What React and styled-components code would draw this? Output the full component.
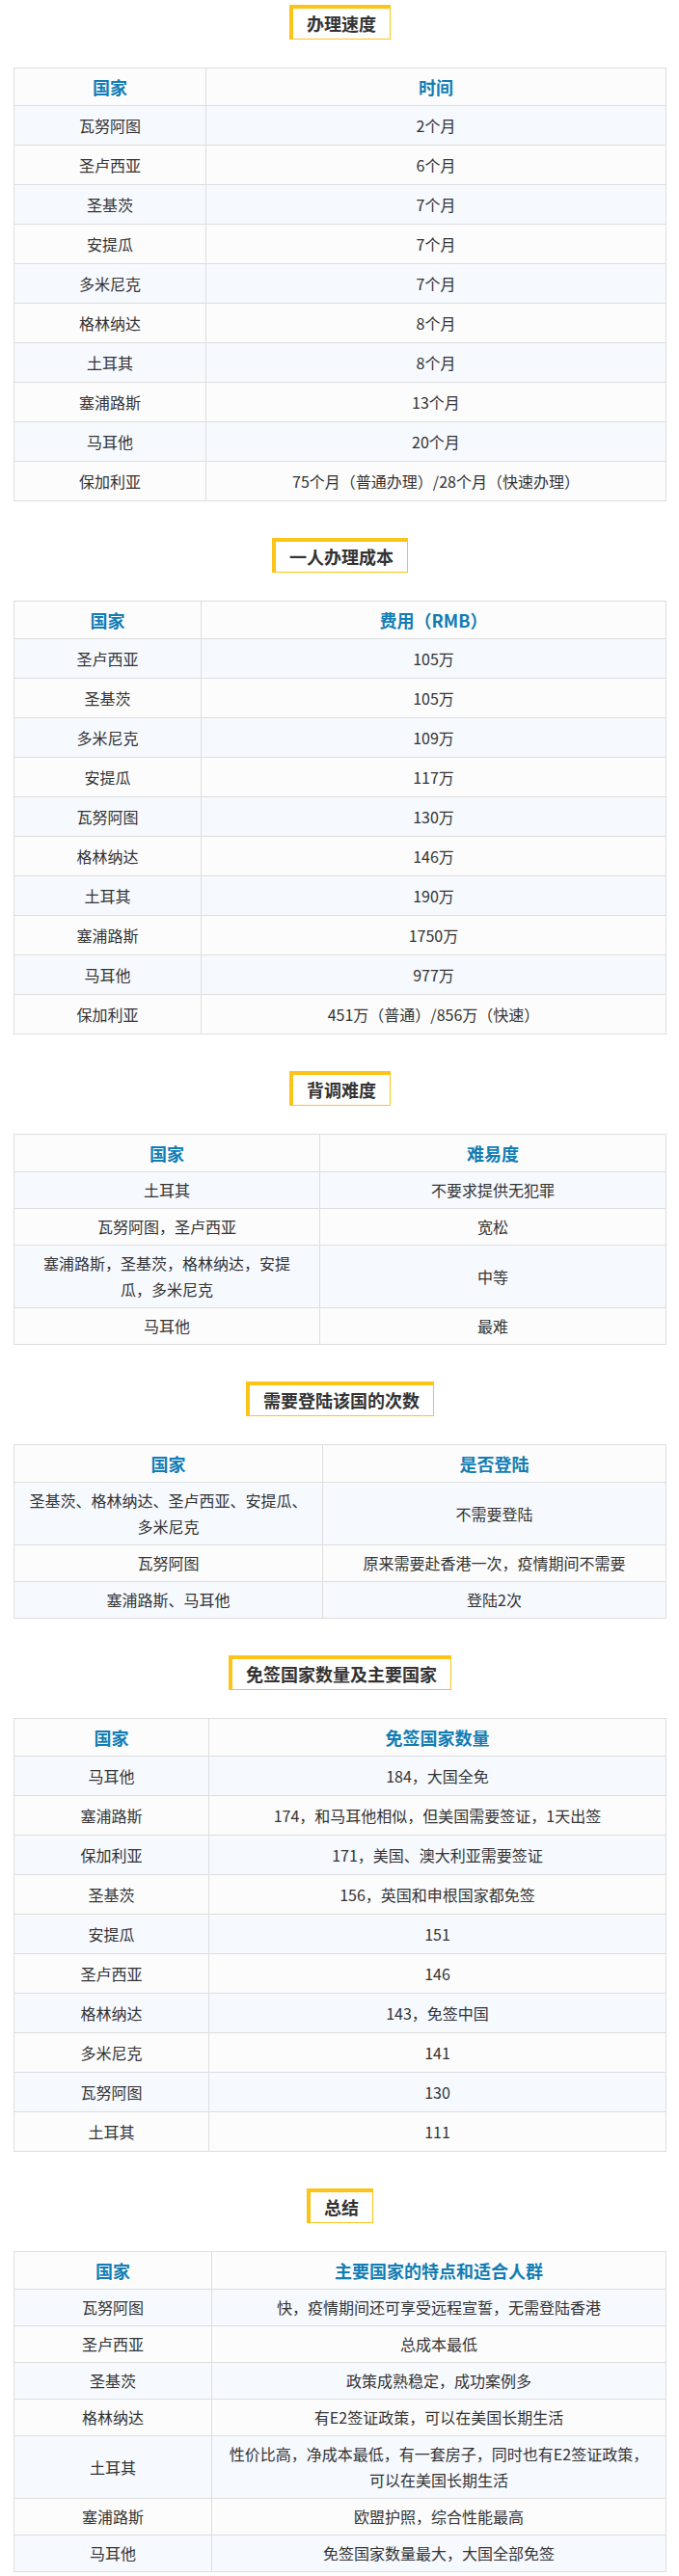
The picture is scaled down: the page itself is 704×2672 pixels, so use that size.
import styled, { createGlobalStyle } from "styled-components";

const GlobalStyle = createGlobalStyle`
  body {
    margin: 0;
    background: #ffffff;
    font-family: "Noto Sans CJK SC", "Noto Sans", sans-serif;
    color: #333333;
  }
`;

const Page = styled.div`
  padding: 5px 13px 14px 14px;
`;

const Section = styled.section`
  & + & {
    margin-top: 38px;
  }
`;

const TitleRow = styled.div`
  display: flex;
  justify-content: center;
  margin-bottom: 29px;
`;

const Title = styled.h2`
  margin: 0;
  height: 36px;
  box-sizing: border-box;
  padding: 0 14px;
  border: 1px solid #fcc419;
  border-top-width: 4px;
  border-left-width: 4px;
  font-size: 18px;
  font-weight: 700;
  line-height: 30px;
  color: #333333;
  white-space: nowrap;
`;

const Table = styled.table`
  width: 100%;
  table-layout: fixed;
  border-collapse: collapse;
  border: 1px solid #dedede;
`;

const HeadCell = styled.th`
  box-sizing: border-box;
  width: ${p => (p.$w ? `${p.$w}px` : "auto")};
  background: #fcfcfc;
  border: 1px solid #dedede;
  padding: 6px 14px 5px;
  font-size: 18px;
  font-weight: 700;
  line-height: 27px;
  color: #127db4;
  text-align: center;
`;

const Row = styled.tr`
  background: ${p => (p.$odd ? "#f6f9fe" : "#fcfcfc")};
`;

const Cell = styled.td`
  border: 1px solid #dedede;
  padding: ${p => (p.$tall ? "7px" : "5px")} ${p => p.$pad}px
    ${p => (p.$tall ? "6px" : "5px")};
  font-size: 16px;
  line-height: 27px;
  color: #333333;
  text-align: center;
`;

const sections = [
  {
    title: "办理速度",
    head: ["国家", "时间"],
    col: 199,
    tall: true,
    rows: [
      ["瓦努阿图", "2个月"],
      ["圣卢西亚", "6个月"],
      ["圣基茨", "7个月"],
      ["安提瓜", "7个月"],
      ["多米尼克", "7个月"],
      ["格林纳达", "8个月"],
      ["土耳其", "8个月"],
      ["塞浦路斯", "13个月"],
      ["马耳他", "20个月"],
      ["保加利亚", "75个月（普通办理）/28个月（快速办理）"],
    ],
  },
  {
    title: "一人办理成本",
    head: ["国家", "费用（RMB）"],
    col: 194,
    tall: true,
    rows: [
      ["圣卢西亚", "105万"],
      ["圣基茨", "105万"],
      ["多米尼克", "109万"],
      ["安提瓜", "117万"],
      ["瓦努阿图", "130万"],
      ["格林纳达", "146万"],
      ["土耳其", "190万"],
      ["塞浦路斯", "1750万"],
      ["马耳他", "977万"],
      ["保加利亚", "451万（普通）/856万（快速）"],
    ],
  },
  {
    title: "背调难度",
    head: ["国家", "难易度"],
    col: 317,
    pad: 26,
    rows: [
      ["土耳其", "不要求提供无犯罪"],
      ["瓦努阿图，圣卢西亚", "宽松"],
      ["塞浦路斯，圣基茨，格林纳达，安提瓜，多米尼克", "中等"],
      ["马耳他", "最难"],
    ],
  },
  {
    title: "需要登陆该国的次数",
    head: ["国家", "是否登陆"],
    col: 320,
    rows: [
      ["圣基茨、格林纳达、圣卢西亚、安提瓜、多米尼克", "不需要登陆"],
      ["瓦努阿图", "原来需要赴香港一次，疫情期间不需要"],
      ["塞浦路斯、马耳他", "登陆2次"],
    ],
  },
  {
    title: "免签国家数量及主要国家",
    head: ["国家", "免签国家数量"],
    col: 202,
    tall: true,
    rows: [
      ["马耳他", "184，大国全免"],
      ["塞浦路斯", "174，和马耳他相似，但美国需要签证，1天出签"],
      ["保加利亚", "171，美国、澳大利亚需要签证"],
      ["圣基茨", "156，英国和申根国家都免签"],
      ["安提瓜", "151"],
      ["圣卢西亚", "146"],
      ["格林纳达", "143，免签中国"],
      ["多米尼克", "141"],
      ["瓦努阿图", "130"],
      ["土耳其", "111"],
    ],
  },
  {
    title: "总结",
    head: ["国家", "主要国家的特点和适合人群"],
    col: 205,
    rows: [
      ["瓦努阿图", "快，疫情期间还可享受远程宣誓，无需登陆香港"],
      ["圣卢西亚", "总成本最低"],
      ["圣基茨", "政策成熟稳定，成功案例多"],
      ["格林纳达", "有E2签证政策，可以在美国长期生活"],
      ["土耳其", "性价比高，净成本最低，有一套房子，同时也有E2签证政策，可以在美国长期生活"],
      ["塞浦路斯", "欧盟护照，综合性能最高"],
      ["马耳他", "免签国家数量最大，大国全部免签"],
    ],
  },
];

const App = () => {
  return (
    <Page>
      <GlobalStyle />
      {sections.map(sec => (
        <Section key={sec.title}>
          <TitleRow>
            <Title>{sec.title}</Title>
          </TitleRow>
          <Table>
            <thead>
              <tr>
                <HeadCell $w={sec.col}>{sec.head[0]}</HeadCell>
                <HeadCell>{sec.head[1]}</HeadCell>
              </tr>
            </thead>
            <tbody>
              {sec.rows.map((row, i) => (
                <Row key={i} $odd={i % 2 === 0}>
                  {row.map((text, j) => (
                    <Cell key={j} $tall={sec.tall} $pad={sec.pad ?? 14}>
                      {text}
                    </Cell>
                  ))}
                </Row>
              ))}
            </tbody>
          </Table>
        </Section>
      ))}
    </Page>
  );
};

export default App;
